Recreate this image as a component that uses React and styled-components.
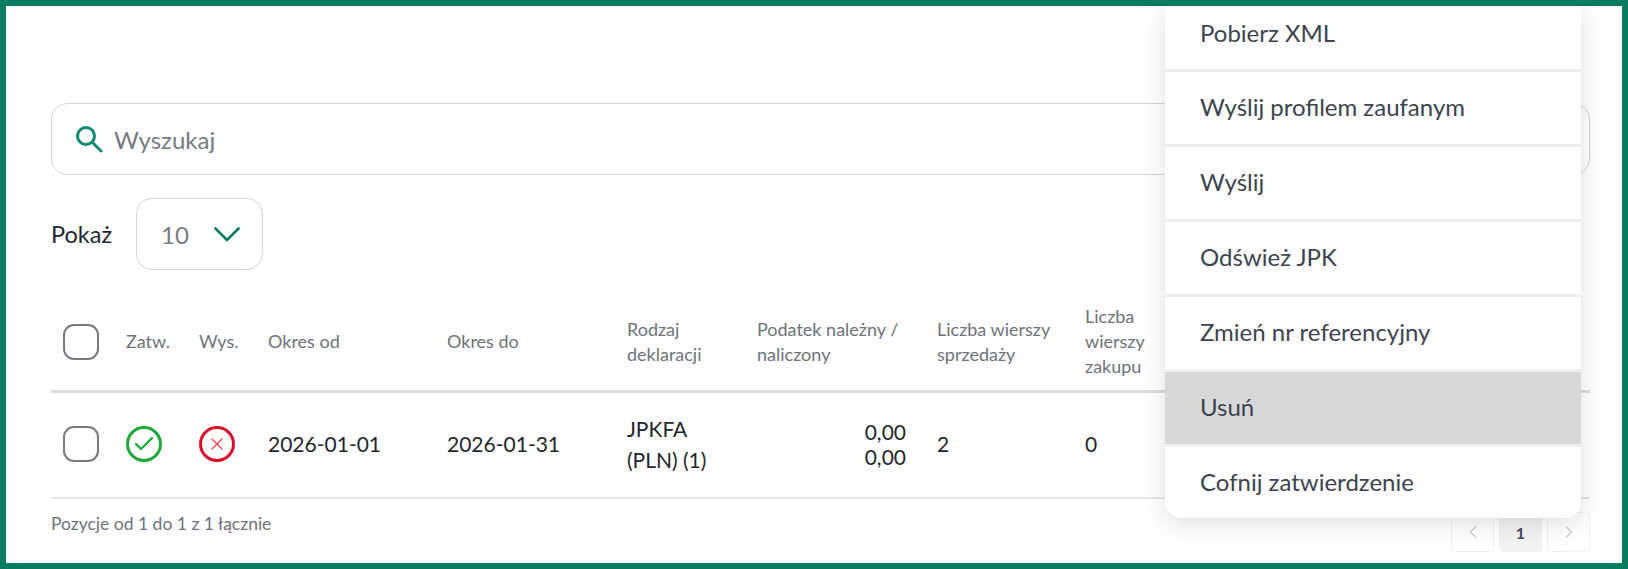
import React from 'react';
import styled, { createGlobalStyle } from 'styled-components';
import { ChevronLeft, ChevronRight, Check, X } from 'lucide-react';

const GlobalStyle = createGlobalStyle`
  html, body {
    margin: 0;
    padding: 0;
    background: #fff;
  }
  body {
    font-family: Lato, "Liberation Sans", sans-serif;
    color: #1f2630;
  }
`;

const Frame = styled.div`
  position: relative;
  box-sizing: border-box;
  width: 1628px;
  height: 569px;
  overflow: hidden;
  background: #fff;
  border: 6px solid #0a7c62;
  padding: 97px 32px 0 45px;
`;

const SearchBar = styled.div`
  box-sizing: border-box;
  display: flex;
  align-items: center;
  gap: 11px;
  height: 72px;
  padding-left: 23px;
  border: 1px solid #d4d4d4;
  border-radius: 16px;
  color: #757b83;
  font-size: 24px;
`;

const ShowRow = styled.div`
  display: flex;
  align-items: center;
  gap: 24px;
  margin-top: 23px;
  font-size: 23.5px;
`;

const Select = styled.div`
  box-sizing: border-box;
  display: flex;
  align-items: center;
  gap: 25px;
  width: 127px;
  height: 72px;
  padding-left: 24px;
  border: 1px solid #d4d4d4;
  border-radius: 16px;
  color: #757b83;
  font-size: 24px;
`;

const columns = '75px 73px 69px 179px 180px 130px 180px 148px 1fr';

const HeadRow = styled.div`
  display: grid;
  grid-template-columns: ${columns};
  align-items: center;
  height: 123px;
  border-bottom: 3px solid #dcdcdc;
  padding-top: 23px;
  box-sizing: border-box;
`;

const HeadCell = styled.div`
  color: #6e737a;
  font-size: 18px;
  line-height: 25px;
`;

const BodyRow = styled.div`
  display: grid;
  grid-template-columns: ${columns};
  align-items: center;
  height: 106px;
  padding-bottom: 3px;
  border-bottom: 2px solid #e8e8e8;
  box-sizing: border-box;
`;

const Cell = styled.div`
  font-size: 21px;
  line-height: ${(p) => p.$lh || 25}px;
  text-align: ${(p) => (p.$right ? 'right' : 'left')};
  padding-right: ${(p) => (p.$right ? 31 : 0)}px;
`;

const Checkbox = styled.span`
  display: block;
  box-sizing: border-box;
  width: 36px;
  height: 36px;
  margin-left: 12px;
  border: 2px solid #777b80;
  border-radius: 11px;
`;

const StatusIcon = styled.span`
  display: flex;
  align-items: center;
  justify-content: center;
  box-sizing: border-box;
  width: 36px;
  height: 36px;
  border-radius: 50%;
  border: 3px solid ${(p) => p.$color};
  color: ${(p) => p.$color};
`;

const Footer = styled.div`
  display: flex;
  justify-content: space-between;
  margin-top: 13px;
`;

const Info = styled.div`
  color: #6e737a;
  font-size: 17.5px;
  line-height: 24px;
`;

const Pager = styled.div`
  display: flex;
  gap: 5px;
`;

const PageButton = styled.div`
  box-sizing: border-box;
  display: flex;
  align-items: center;
  justify-content: center;
  width: 43px;
  height: 40px;
  border: 1px solid #f0f0f0;
  border-radius: 4px;
  background: ${(p) => (p.$active ? '#f3f3f3' : '#fff')};
  color: ${(p) => (p.$active ? '#444b55' : '#cfd2d6')};
  font-size: 16px;
  font-weight: 700;
`;

const Menu = styled.div`
  position: absolute;
  top: 0;
  left: 1159px;
  width: 416px;
  background: #fff;
  border-radius: 0 0 16px 16px;
  box-shadow: 0 6px 24px rgba(0, 0, 0, 0.13);
  overflow: hidden;
`;

const MenuItem = styled.div`
  box-sizing: border-box;
  display: flex;
  align-items: center;
  height: ${(p) => p.$h || 75}px;
  padding-left: 35px;
  padding-bottom: ${(p) => p.$pb ?? 4}px;
  font-size: 24px;
  color: #3d4450;
  background: ${(p) => (p.$active ? '#d8d8d8' : '#fff')};
  border-bottom: 3px solid #eeeeee;
  &:last-child {
    border-bottom: 0;
  }
`;

const menuItems = ['Wyślij profilem zaufanym', 'Wyślij', 'Odśwież JPK', 'Zmień nr referencyjny'];

const SearchIcon = () => (
  <svg width="28" height="28" viewBox="0 0 28 28" fill="none" stroke="#0f8a72" strokeWidth="3" strokeLinecap="round">
    <circle cx="11" cy="11" r="8.5" />
    <path d="M17.5 17.5L26 26" />
  </svg>
);

const ArrowDown = () => (
  <svg width="26" height="15" viewBox="0 0 26 15" fill="none" stroke="#0a7c62" strokeWidth="2.6" strokeLinecap="round" strokeLinejoin="round">
    <path d="M1.5 1.5L13 13L24.5 1.5" />
  </svg>
);

export default function App() {
  return (
    <Frame>
      <GlobalStyle />
      <SearchBar>
        <SearchIcon />
        Wyszukaj
      </SearchBar>
      <ShowRow>
        Pokaż
        <Select>
          10
          <ArrowDown />
        </Select>
      </ShowRow>
      <HeadRow>
        <div><Checkbox /></div>
        <HeadCell>Zatw.</HeadCell>
        <HeadCell>Wys.</HeadCell>
        <HeadCell>Okres od</HeadCell>
        <HeadCell>Okres do</HeadCell>
        <HeadCell>Rodzaj<br />deklaracji</HeadCell>
        <HeadCell>Podatek należny /<br />naliczony</HeadCell>
        <HeadCell>Liczba wierszy<br />sprzedaży</HeadCell>
        <HeadCell>Liczba<br />wierszy<br />zakupu</HeadCell>
      </HeadRow>
      <BodyRow>
        <div><Checkbox /></div>
        <StatusIcon $color="#1fa83c"><Check size={24} strokeWidth={2.4} /></StatusIcon>
        <StatusIcon $color="#d8102c"><X size={20} strokeWidth={1.6} color="#ea4c4c" /></StatusIcon>
        <Cell>2026-01-01</Cell>
        <Cell>2026-01-31</Cell>
        <Cell $lh={31}>JPKFA<br />(PLN) (1)</Cell>
        <Cell $right>0,00<br />0,00</Cell>
        <Cell>2</Cell>
        <Cell>0</Cell>
      </BodyRow>
      <Footer>
        <Info>Pozycje od 1 do 1 z 1 łącznie</Info>
        <Pager>
          <PageButton><ChevronLeft size={20} /></PageButton>
          <PageButton $active>1</PageButton>
          <PageButton><ChevronRight size={20} /></PageButton>
        </Pager>
      </Footer>
      <Menu>
        <MenuItem $h={66} $pb={11}>Pobierz XML</MenuItem>
        {menuItems.map((item) => (
          <MenuItem key={item}>{item}</MenuItem>
        ))}
        <MenuItem $active>Usuń</MenuItem>
        <MenuItem $h={71} $pb={2}>Cofnij zatwierdzenie</MenuItem>
      </Menu>
    </Frame>
  );
}
